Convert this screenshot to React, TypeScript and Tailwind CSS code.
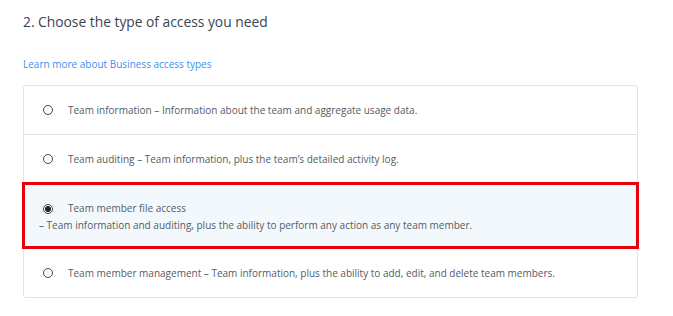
import { useState } from 'react';

interface AccessOption {
  id: string;
  title: string;
  description: string;
  wrap?: boolean;
}

const options: AccessOption[] = [
  {
    id: 'info',
    title: 'Team information',
    description: 'Information about the team and aggregate usage data.',
  },
  {
    id: 'auditing',
    title: 'Team auditing',
    description: 'Team information, plus the team\u2019s detailed activity log.',
  },
  {
    id: 'file',
    title: 'Team member file access',
    description: 'Team information and auditing, plus the ability to perform any action as any team member.',
    wrap: true,
  },
  {
    id: 'management',
    title: 'Team member management',
    description: 'Team information, plus the ability to add, edit, and delete team members.',
  },
];

function Radio({ checked }: { checked: boolean }) {
  return (
    <span className="flex h-[10px] w-[10px] shrink-0 items-center justify-center rounded-full border border-[#444] bg-white">
      {checked && <span className="h-[6px] w-[6px] rounded-full bg-[#222]" />}
    </span>
  );
}

export default function App() {
  const [selected, setSelected] = useState('file');

  return (
    <div className="h-[316px] w-[673px] bg-white pl-[23px] pt-[12px] font-['Open_Sans',sans-serif]">
      <h2 className="text-[13.8px] leading-[20px] text-[#3b4350]">2. Choose the type of access you need</h2>
      <a href="#" className="mt-[25px] block text-[10px] leading-[14px] text-[#3d8ff0]">
        Learn more about Business access types
      </a>

      <div className="mt-[14px] w-[615px] rounded-[3px] border border-[#dbe5f0]">
        {options.map((option, index) => {
          const checked = option.id === selected;
          const last = index === options.length - 1;
          return (
            <div
              key={option.id}
              onClick={() => setSelected(option.id)}
              className={`relative cursor-pointer text-[10px] leading-[17px] text-[#555b63] ${
                last ? '' : 'border-b border-[#dbe5f0]'
              } ${checked ? 'bg-[#f3f8fd]' : ''}`}
            >
              {option.wrap ? (
                <div className="pb-[14px] pl-[15px] pt-[16px]">
                  <div className="flex items-center pl-[4px]">
                    <Radio checked={checked} />
                    <span className="ml-[15px]">{option.title}</span>
                  </div>
                  <div>– {option.description}</div>
                </div>
              ) : (
                <div className="flex h-[48px] items-center pl-[19px]">
                  <Radio checked={checked} />
                  <span className="ml-[15px]">
                    {option.title} – {option.description}
                  </span>
                </div>
              )}
              {checked && (
                <span className="pointer-events-none absolute -inset-x-[2px] -bottom-[1px] -top-[2px] border-[3px] border-[#e8000b]" />
              )}
            </div>
          );
        })}
      </div>
    </div>
  );
}
